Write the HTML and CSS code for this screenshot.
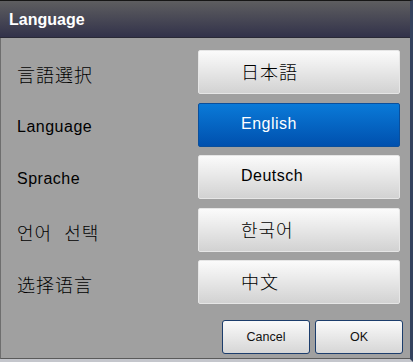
FILE: index.html
```html
<!DOCTYPE html>
<html lang="ja">
<head>
    <meta charset="UTF-8">
    <meta name="viewport" content="width=device-width, initial-scale=1.0">
    <title>Language</title>
    <link rel="stylesheet" href="styles.css">
</head>
<body>

    <!-- Language dialog -->
    <div class="dialog">
        <div class="titlebar">Language</div>

        <div class="dialog-body">
            <div class="lang-list">
                <div class="lang-row">
                    <span class="lang-label cjk-jp" lang="ja">言語選択</span>
                    <button class="lang-btn cjk-jp" lang="ja">日本語</button>
                </div>
                <div class="lang-row">
                    <span class="lang-label latin" lang="en">Language</span>
                    <button class="lang-btn latin selected" lang="en">English</button>
                </div>
                <div class="lang-row">
                    <span class="lang-label latin" lang="de">Sprache</span>
                    <button class="lang-btn latin" lang="de">Deutsch</button>
                </div>
                <div class="lang-row">
                    <span class="lang-label cjk-kr" lang="ko">언어&nbsp; 선택</span>
                    <button class="lang-btn cjk-kr" lang="ko">한국어</button>
                </div>
                <div class="lang-row">
                    <span class="lang-label cjk-sc" lang="zh">选择语言</span>
                    <button class="lang-btn cjk-sc" lang="zh">中文</button>
                </div>
            </div>

            <div class="actions">
                <button class="action-btn">Cancel</button>
                <button class="action-btn">OK</button>
            </div>
        </div>
    </div>

</body>
</html>
```

FILE: styles.css
```css
/* Basic Reset */
body {
    margin: 0;
    padding: 0;
    background-color: #c4c6cc;
    font-family: "Liberation Sans", Arial, sans-serif;
}

/* Dialog frame */
.dialog {
    width: 413px;
    height: 362px;
    box-sizing: border-box;
    border-top: 1px solid #161616;
    border-right: 3px solid #34425e;
    border-bottom: 3px solid #c4c6cc;
    display: flex;
    flex-direction: column;
    background-color: #a0a0a0;
}

/* Title bar */
.titlebar {
    height: 36px;
    line-height: 37px;
    padding-left: 9px;
    color: #ffffff;
    font-size: 16px;
    font-weight: bold;
    background: linear-gradient(#5e5e60, #32324a);
    border-bottom: 1px solid #2a2a36;
}

.dialog-body {
    flex: 1;
    display: flex;
    flex-direction: column;
    border-left: 1px solid #6e6e6e;
    border-bottom: 1px solid #5a5a5a;
    padding: 12px 7px 0 16px;
}

/* Language rows */
.lang-list {
    display: flex;
    flex-direction: column;
    gap: 8.5px;
}

.lang-row {
    display: flex;
    align-items: center;
    justify-content: space-between;
    padding-right: 3px;
}

.lang-label {
    color: #000000;
    padding-top: 4px;
}

.latin {
    font-family: "Liberation Sans", Arial, sans-serif;
    font-size: 16px;
    letter-spacing: 0.5px;
}

.cjk-jp {
    font-family: "Noto Sans CJK JP", sans-serif;
    font-size: 18px;
    font-weight: 300;
    letter-spacing: 1px;
}

.cjk-kr {
    font-family: "Noto Sans CJK KR", sans-serif;
    font-size: 18px;
    font-weight: 300;
    letter-spacing: 1px;
}

.cjk-sc {
    font-family: "Noto Sans CJK SC", sans-serif;
    font-size: 18px;
    font-weight: 300;
    letter-spacing: 1px;
}

.lang-btn {
    width: 202px;
    height: 44px;
    box-sizing: border-box;
    padding: 0 0 2px 42px;
    text-align: left;
    color: #000000;
    background: linear-gradient(#fbfbfb, #d2d2d2);
    border: 1px solid #e6e6e6;
    border-radius: 2px;
}

.lang-btn.selected {
    color: #ffffff;
    background: linear-gradient(#0a7ad8, #0050ae);
    border-color: #0a4f9c;
}

/* Cancel / OK */
.actions {
    display: flex;
    justify-content: flex-end;
    gap: 5px;
    margin-top: auto;
    margin-bottom: 4px;
}

.action-btn {
    width: 88px;
    height: 34px;
    font-family: "Liberation Sans", Arial, sans-serif;
    font-size: 12.5px;
    color: #111111;
    background: linear-gradient(#fafafa, #d6d6d6);
    border: 1px solid #1c3d6c;
    border-radius: 3px;
}
```
